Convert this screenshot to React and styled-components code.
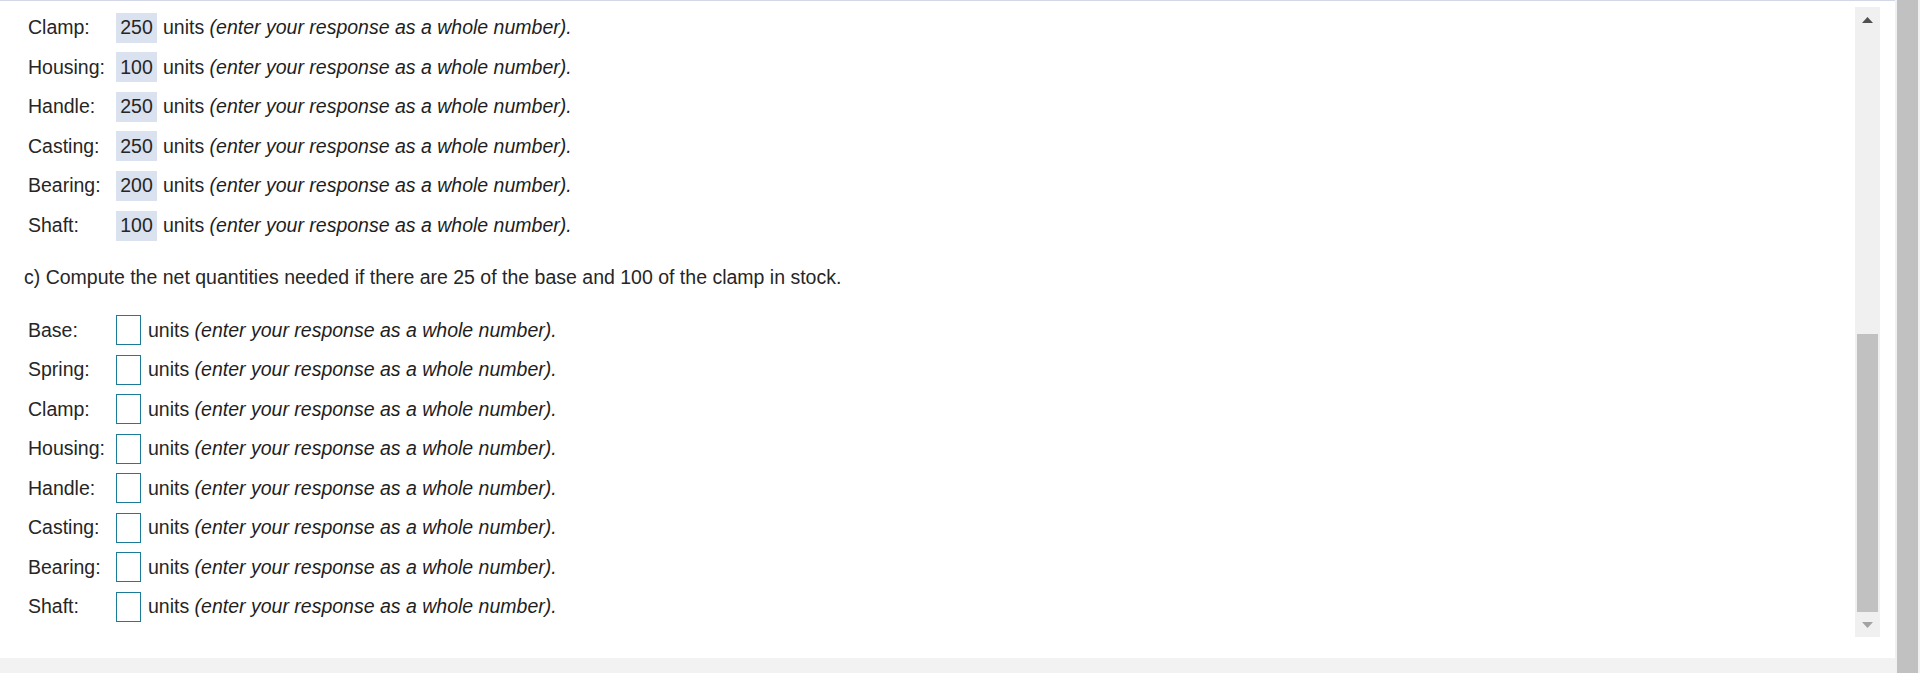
import React from "react";
import styled, { createGlobalStyle } from "styled-components";

const GlobalStyle = createGlobalStyle`
  html, body { margin: 0; padding: 0; background: #ffffff; overflow: hidden; }
  body { font-family: "Liberation Sans", Arial, sans-serif; }
`;

const Page = styled.div`
  display: flex;
  width: 1920px;
  height: 673px;
  background: #ffffff;
`;

const MainColumn = styled.div`
  flex: 1;
  display: flex;
  flex-direction: column;
  min-width: 0;
`;

const Panel = styled.div`
  flex: 1;
  display: flex;
  border-top: 1px solid #d3d7e7;
  background: #ffffff;
  min-height: 0;
`;

const Content = styled.div`
  flex: 1;
  padding: 7px 0 0 24px;
  color: #262626;
  font-size: 19.5px;
`;

const RowList = styled.div`
  display: flex;
  flex-direction: column;
  margin-left: 4px;
`;

const Row = styled.div`
  display: flex;
  align-items: center;
  height: 39.55px;
  white-space: nowrap;
`;

const Label = styled.span`
  width: 88px;
  flex: none;
`;

const Value = styled.span`
  display: inline-flex;
  align-items: center;
  justify-content: center;
  width: 41px;
  height: 30px;
  box-sizing: border-box;
  background: #dae2f0;
  margin-right: 6px;
`;

const Field = styled.span`
  display: inline-block;
  width: 25px;
  height: 30px;
  box-sizing: border-box;
  border: 1px solid #1b7b98;
  background: #ffffff;
  margin-right: 7px;
`;

const Hint = styled.em`
  font-style: italic;
  color: #1e1e1e;
`;

const Question = styled.p`
  margin: 21px 0 22px;
  line-height: 22px;
`;

const ScrollArea = styled.div`
  width: 25px;
  padding: 6px 15px 21px 0;
  display: flex;
`;

const Track = styled.div`
  flex: 1;
  display: flex;
  flex-direction: column;
  background: #f0f0f0;
`;

const ArrowButton = styled.div`
  height: 25px;
  flex: none;
  display: flex;
  align-items: center;
  justify-content: center;
`;

const Rail = styled.div`
  flex: 1;
  display: flex;
  flex-direction: column;
  justify-content: flex-end;
  padding: 0 2px;
`;

const Thumb = styled.div`
  height: 278px;
  background: #c1c1c1;
`;

const BottomStrip = styled.div`
  height: 15px;
  flex: none;
  background: #f2f2f2;
`;

const PageScroll = styled.div`
  width: 25px;
  flex: none;
  display: flex;
  padding: 0 2px;
  box-sizing: border-box;
  background: #f1f1f1;
`;

const PageThumb = styled.div`
  flex: 1;
  background: #c1c1c1;
`;

const Arrow = ({ up, color }) => (
  <svg width="11" height="6" viewBox="0 0 11 6">
    <polygon
      points={up ? "5.5,0 11,6 0,6" : "0,0 11,0 5.5,6"}
      fill={color}
    />
  </svg>
);

const gross = [
  ["Clamp:", 250],
  ["Housing:", 100],
  ["Handle:", 250],
  ["Casting:", 250],
  ["Bearing:", 200],
  ["Shaft:", 100],
];

const net = [
  "Base:",
  "Spring:",
  "Clamp:",
  "Housing:",
  "Handle:",
  "Casting:",
  "Bearing:",
  "Shaft:",
];

const HintText = () => (
  <>
    units&nbsp;<Hint>(enter your response as a whole number).</Hint>
  </>
);

export default function App() {
  return (
    <>
      <GlobalStyle />
      <Page>
        <MainColumn>
          <Panel>
            <Content>
              <RowList>
                {gross.map(([label, value]) => (
                  <Row key={label}>
                    <Label>{label}</Label>
                    <Value>{value}</Value>
                    <HintText />
                  </Row>
                ))}
              </RowList>
              <Question>
                c) Compute the net quantities needed if there are 25 of the base
                and 100 of the clamp in stock.
              </Question>
              <RowList>
                {net.map((label) => (
                  <Row key={label}>
                    <Label>{label}</Label>
                    <Field />
                    <HintText />
                  </Row>
                ))}
              </RowList>
            </Content>
            <ScrollArea>
              <Track>
                <ArrowButton>
                  <Arrow up color="#505050" />
                </ArrowButton>
                <Rail>
                  <Thumb />
                </Rail>
                <ArrowButton>
                  <Arrow color="#a3a3a3" />
                </ArrowButton>
              </Track>
            </ScrollArea>
          </Panel>
          <BottomStrip />
        </MainColumn>
        <PageScroll>
          <PageThumb />
        </PageScroll>
      </Page>
    </>
  );
}
